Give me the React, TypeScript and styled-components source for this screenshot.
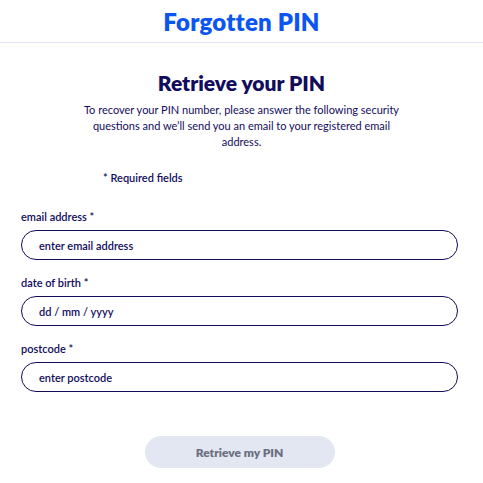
import React from 'react'
import styled, { createGlobalStyle } from 'styled-components'

const Navy = '#120c5c'
const Blue = '#0b55f0'

const GlobalStyle = createGlobalStyle`
  body {
    margin: 0;
    background: #ffffff;
    font-family: Lato, "Noto Sans", sans-serif;
    color: ${Navy};
  }
`

export default function App() {
  return (
    <>
      <GlobalStyle />
      <Header>
        <HeaderTitle>Forgotten PIN</HeaderTitle>
      </Header>
      <Main>
        <Title>Retrieve your PIN</Title>
        <Intro>
          To recover your PIN number, please answer the following security
          questions and we’ll send you an email to your registered email
          address.
        </Intro>
        <Required>* Required fields</Required>
        <Form>
          <Field label="email address *" placeholder="enter email address" />
          <Field label="date of birth *" placeholder="dd / mm / yyyy" />
          <Field label="postcode *" placeholder="enter postcode" />
          <ButtonRow>
            <SubmitButton type="button" disabled>Retrieve my PIN</SubmitButton>
          </ButtonRow>
        </Form>
      </Main>
    </>
  )
}

function Field({ label, placeholder }: { label: string; placeholder: string }) {
  return (
    <FieldGroup>
      <Label>{label}</Label>
      <Input placeholder={placeholder} />
    </FieldGroup>
  )
}

const Header = styled.header`
  height: 42px;
  border-bottom: 1px solid #e4e4f4;
  display: flex;
  align-items: center;
  justify-content: center;
`

const HeaderTitle = styled.h1`
  margin: 0;
  font-size: 24px;
  font-weight: 800;
  color: ${Blue};
  letter-spacing: 0.2px;
`

const Main = styled.main`
  display: flex;
  flex-direction: column;
`

const Title = styled.h2`
  margin: 28px 0 0;
  text-align: center;
  font-size: 21px;
  font-weight: 800;
  line-height: 24px;
  color: ${Navy};
`

const Intro = styled.p`
  margin: 7px auto 0;
  max-width: 320px;
  text-align: center;
  font-size: 11px;
  line-height: 16px;
  color: ${Navy};
`

const Required = styled.div`
  margin: 20px 0 0 103px;
  font-size: 11px;
  font-weight: 600;
  line-height: 16px;
`

const Form = styled.form`
  display: flex;
  flex-direction: column;
  gap: 15px;
  margin: 23px 25px 0 21px;
`

const FieldGroup = styled.div`
  display: flex;
  flex-direction: column;
  gap: 5px;
`

const Label = styled.label`
  font-size: 11px;
  font-weight: 600;
  line-height: 16px;
`

const Input = styled.input`
  box-sizing: border-box;
  height: 30px;
  width: 100%;
  border: 1.5px solid ${Navy};
  border-radius: 15px;
  padding: 0 17px;
  font-family: inherit;
  font-size: 11px;
  font-weight: 600;
  color: ${Navy};
  outline: none;

  &::placeholder {
    color: ${Navy};
    opacity: 1;
  }
`

const ButtonRow = styled.div`
  display: flex;
  justify-content: center;
  margin-top: 29px;
`

const SubmitButton = styled.button`
  width: 190px;
  height: 32px;
  border: none;
  border-radius: 16px;
  background: #e3e7f2;
  color: #6b6f82;
  font-family: inherit;
  font-size: 12px;
  font-weight: 800;
`
